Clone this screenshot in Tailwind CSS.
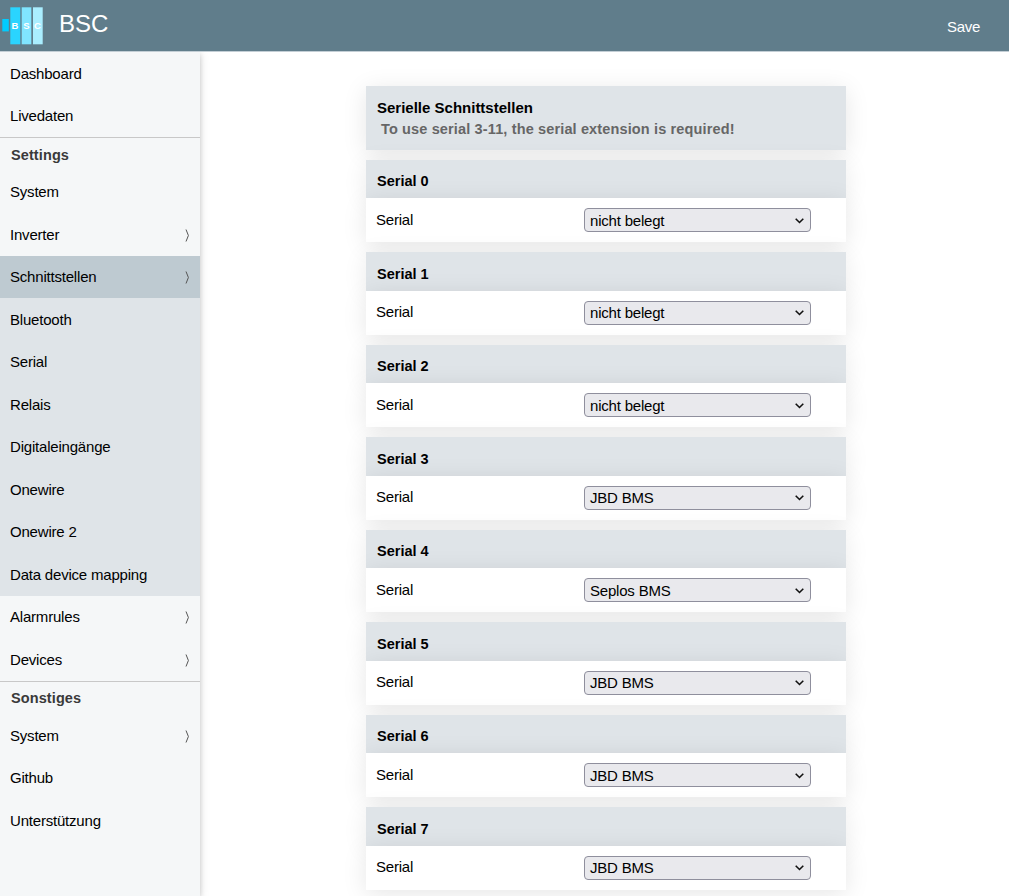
<!DOCTYPE html>
<html lang="de">
<head>
<meta charset="utf-8">
<title>BSC</title>
<script src="https://cdn.jsdelivr.net/npm/@tailwindcss/browser@4"></script>
</head>
<body class="h-[896px] overflow-hidden bg-white font-['Liberation_Sans',Arial,sans-serif] text-[15px] leading-[22.5px] text-black">
<header class="relative z-10 flex h-[52px] items-center justify-between border-b border-[#c3ced5] bg-[#607d8b] pr-[29px] pl-[2px] text-white">
  <div class="flex items-center">
    <svg class="mt-px h-[40px] w-[42px]" viewBox="0 0 42 40" font-family="Liberation Sans, Arial, sans-serif" font-size="9.5" font-weight="bold" fill="#fff" text-anchor="middle">
      <rect x="0.3" y="13" width="6.5" height="12.4" fill="#00ccff"/>
      <rect x="8.3" y="1.3" width="10" height="37" fill="#2ad4ff"/>
      <rect x="19.7" y="1.3" width="9.6" height="37" fill="#80e5ff"/>
      <rect x="31" y="1.3" width="9.7" height="37" fill="#aaeeff"/>
      <text x="13" y="22.7">B</text><text x="24.3" y="22.7">S</text><text x="35.5" y="22.7">C</text>
    </svg>
    <h1 class="-mt-[4px] ml-[15px] text-[24px] leading-[36px]">BSC</h1>
  </div>
  <a class="mt-[3px] tracking-[-0.3px]">Save</a>
</header>
<div class="flex h-[844px]">
  <nav id="menu" class="w-[200px] shrink-0 bg-[#f5f7f8] pt-px tracking-[-0.2px] shadow-[0_2px_5px_rgba(0,0,0,0.16),0_2px_10px_rgba(0,0,0,0.12)]"></nav>
  <main class="flex-1 pt-[34px] pl-[166px]">
    <div id="cards" class="w-[480px]">
      <section class="mb-[9.7px] h-[64px] bg-[#dfe4e8] pt-[11px] pl-[11px] font-bold shadow-[0_4px_25px_rgba(0,0,0,0.1)]">
        <h2 class="text-[15px] leading-[21px]">Serielle Schnittstellen</h2>
        <p class="pt-px pl-[4px] text-[14.5px] leading-[21px] tracking-[0.14px] text-[#666]">To use serial 3-11, the serial extension is required!</p>
      </section>
    </div>
  </main>
</div>
<script>
const arrow = '<svg class="mt-[2px] h-[14px] w-[5px]" viewBox="0 0 5 14" fill="none" stroke="#555" stroke-width="1"><path d="M1 .5 3.4 6.5 1 12.5"/></svg>';
const row = (name, bg, sub) => `<a class="flex h-[42.5px] items-center justify-between pr-[10px] pl-[10px] ${bg}"><span class="pt-[0.5px]">${name}</span>${sub ? arrow : ''}</a>`;
const label = (name, height) => `<div class="${height} border-t border-[#c8c8c8] pt-[5.5px] pl-[11px] text-[14.5px] font-bold tracking-[0.1px] text-[#3a3a3a]">${name}</div>`;
document.getElementById('menu').innerHTML =
  '<div class="h-[84px]">' + row('Dashboard', '') + row('Livedaten', '-mt-px') + '</div>' +
  label('Settings', 'h-[33.8px]') + row('System', '') + row('Inverter', '', true) + row('Schnittstellen', 'bg-[#becad1]', true) +
  ['Bluetooth', 'Serial', 'Relais', 'Digitaleingänge', 'Onewire', 'Onewire 2', 'Data device mapping'].map(n => row(n, 'bg-[#dfe4e8]')).join('') +
  row('Alarmrules', '', true) + row('Devices', '', true) +
  label('Sonstiges', 'h-[33.8px]') + row('System', '', true) + row('Github', '') + row('Unterstützung', '');

const values = ['nicht belegt', 'nicht belegt', 'nicht belegt', 'JBD BMS', 'Seplos BMS', 'JBD BMS', 'JBD BMS', 'JBD BMS'];
document.getElementById('cards').insertAdjacentHTML('beforeend', values.map((v, i) => `
  <section class="mb-[10px] h-[82.5px]">
    <h3 class="h-[38.5px] bg-[#dfe4e8] pt-[10.4px] pl-[11px] text-[14.5px] font-bold shadow-[0_4px_25px_rgba(0,0,0,0.09)]">Serial ${i}</h3>
    <div class="flex h-[44px] bg-white pl-[10px] tracking-[-0.2px] shadow-[0_4px_25px_rgba(0,0,0,0.1)]">
      <label class="w-[208px] pt-[10.4px]">Serial</label>
      <div class="mt-[10px] flex h-[24px] w-[227px] items-center justify-between rounded-[4px] border border-[#8f8f9d] bg-[#e9e9ed] pr-[6px] pl-[5px]">
        <span class="pt-[1.8px]">${v}</span>
        <svg class="mt-px h-[6px] w-[9px]" viewBox="0 0 9 6" fill="none" stroke="#111" stroke-width="1.6"><path d="M.7.8 4.5 4.5 8.3.8"/></svg>
      </div>
    </div>
  </section>`).join(''));
</script>
</body>
</html>
